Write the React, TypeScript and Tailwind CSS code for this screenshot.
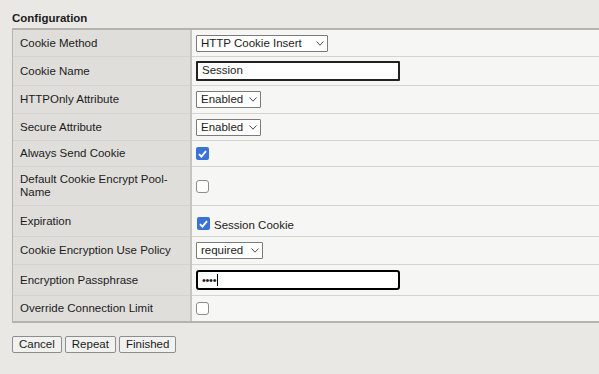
import type { ReactNode } from 'react';

const font = { fontFamily: '"Liberation Sans", Arial, sans-serif' };

function Chevron() {
  return (
    <svg width="8" height="5" viewBox="0 0 8 5" className="shrink-0">
      <path d="M0.5 0.5 L4 4.2 L7.5 0.5" fill="none" stroke="#4a4a4a" strokeWidth="1" />
    </svg>
  );
}

function Select({ value, width }: { value: string; width: string }) {
  return (
    <div
      className={`flex h-[17px] items-center justify-between rounded-[1px] border border-[#7b7b7b] bg-white pl-[4px] pr-[3px] leading-[15px] ${width}`}
    >
      <span>{value}</span>
      <Chevron />
    </div>
  );
}

function Checkbox({ checked }: { checked?: boolean }) {
  if (checked) {
    return (
      <span className="flex h-[13px] w-[13px] shrink-0 items-center justify-center rounded-[2px] bg-[#3a73d8]">
        <svg width="9" height="8" viewBox="0 0 9 8">
          <path d="M1 4.2 L3.4 6.6 L8 1.2" fill="none" stroke="white" strokeWidth="1.8" />
        </svg>
      </span>
    );
  }
  return <span className="block h-[13px] w-[13px] shrink-0 rounded-[3px] border border-[#8c8c8c] bg-white" />;
}

function Row({ label, height, children, last, top }: { label: ReactNode; height: string; children: ReactNode; last?: boolean; top?: boolean }) {
  const line = last ? '' : 'border-b border-[#d4d3d0]';
  return (
    <div className={`flex ${height}`}>
      <div className={`flex w-[177px] shrink-0 items-center bg-[#dfdedb] pl-[7px] leading-[13px] ${line}`}>{label}</div>
      <div className="w-[2px] shrink-0 bg-[#c6c5c2]" />
      <div className={`flex flex-1 bg-[#f6f6f4] pl-[4px] ${top ? 'items-start' : 'items-center'} ${line}`}>{children}</div>
    </div>
  );
}

export default function App() {
  return (
    <div className="h-[374px] w-[599px] overflow-hidden bg-[#e9e8e4] pl-[12px] text-[11.5px] text-[#1c1c1c]" style={font}>
      <div className="pt-[11px] text-[11.5px] font-bold leading-[14px]">Configuration</div>
      <div className="mt-[3px] border-y-2 border-l border-[#b4b3b0]">
        <Row label="Cookie Method" height="h-[27px]">
          <Select value="HTTP Cookie Insert" width="w-[132px]" />
        </Row>
        <Row label="Cookie Name" height="h-[29px]">
          <div className="flex h-[20px] w-[204px] items-center rounded-[1px] border-2 border-[#222] bg-white pl-[4px]">Session</div>
        </Row>
        <Row label="HTTPOnly Attribute" height="h-[28px]">
          <Select value="Enabled" width="w-[65px]" />
        </Row>
        <Row label="Secure Attribute" height="h-[27px]">
          <Select value="Enabled" width="w-[65px]" />
        </Row>
        <Row label="Always Send Cookie" height="h-[26px]">
          <Checkbox checked />
        </Row>
        <Row
          label={
            <span>
              Default Cookie Encrypt Pool-
              <br />
              Name
            </span>
          }
          height="h-[39px]"
        >
          <Checkbox />
        </Row>
        <Row label="Expiration" height="h-[31px]" top>
          <div className="ml-[1px] mt-[11px]">
            <Checkbox checked />
          </div>
          <span className="ml-[4px] mt-[12px] leading-[14px]">Session Cookie</span>
        </Row>
        <Row label="Cookie Encryption Use Policy" height="h-[28px]">
          <Select value="required" width="w-[67px]" />
        </Row>
        <Row label="Encryption Passphrase" height="h-[31px]">
          <div className="flex h-[20px] w-[204px] items-center rounded-[3px] border-2 border-black bg-white pl-[4px]">
            <span className="text-[11px] leading-[11px] tracking-[-0.3px]">••••</span>
            <span className="ml-[1px] h-[12px] w-[1px] bg-black" />
          </div>
        </Row>
        <Row label="Override Connection Limit" height="h-[25px]" last>
          <Checkbox />
        </Row>
      </div>
      <div className="mt-[13px] flex gap-[3px]">
        {['Cancel', 'Repeat', 'Finished'].map((b) => (
          <div
            key={b}
            className="flex h-[17px] items-center rounded-[2px] border border-[#8d8d8d] bg-[#f1f1f0] px-[6px] leading-[15px]"
          >
            {b}
          </div>
        ))}
      </div>
    </div>
  );
}
